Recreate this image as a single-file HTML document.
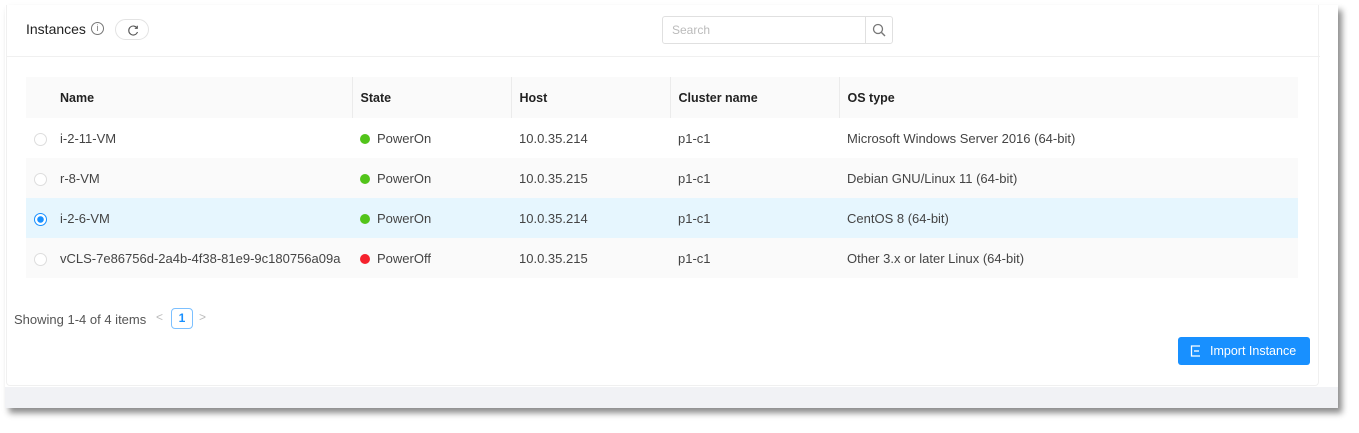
<!DOCTYPE html>
<html><head><meta charset="utf-8"><style>
*{box-sizing:border-box;margin:0;padding:0}
body{width:1359px;height:433px;background:#fff;font-family:"Liberation Sans",Arial,sans-serif;position:relative;overflow:hidden;color:#333}
.win{position:absolute;left:5px;top:5px;width:1333px;height:403px;background:#fff;box-shadow:4px 5px 6px rgba(0,0,0,.45)}
.band{position:absolute;left:0;top:382px;width:1333px;height:21px;background:#f1f2f5}
.card{position:absolute;left:1px;top:0;width:1313px;height:381px;border:1px solid #f0f0f0;border-top:none;background:#fff;border-radius:0 0 4px 4px}
.hdr{position:absolute;left:0;top:0;width:1313px;height:52px;border-bottom:1px solid #f0f0f0}
.title{position:absolute;left:19px;top:16px;font-size:14px;color:#222}
.info{position:absolute;left:84px;top:17px;width:13px;height:13px;border:1px solid #777;border-radius:50%;font-size:9px;text-align:center;line-height:11px;color:#777}
.ref{position:absolute;left:108px;top:14px;width:34px;height:21px;border:1px solid #e3e3e3;border-radius:11px}
.search{position:absolute;left:655px;top:11px;width:231px;height:28px;border:1px solid #e0e0e0;border-radius:3px}
.search span{position:absolute;left:9px;top:6px;font-size:12px;color:#bbb}
.search .btn{position:absolute;right:0;top:0;width:27px;height:26px;border-left:1px solid #e0e0e0}
table{position:absolute;left:19px;top:72px;width:1272px;border-collapse:collapse;font-size:13px;table-layout:fixed}
td,th{height:40px;text-align:left;font-weight:normal;padding:0 0 0 8px;white-space:nowrap;overflow:visible}
th{background:#fafafa;color:#222;font-weight:bold;height:41px;font-size:12.5px}
tr.s td{background:#fafafa}
tr.sel td{background:#e6f6fe}
.sep{border-left:1px solid #ebebeb}
.rad{display:inline-block;width:13px;height:13px;border:1px solid #ddd;border-radius:50%;background:#fff;vertical-align:middle}
.rad.on{border-color:#1890ff;background:radial-gradient(#1890ff 3px,#fff 3.5px)}
.dot{display:inline-block;width:10px;height:10px;border-radius:50%;margin-right:7px;vertical-align:-1px}
.g{background:#52c41a}.r{background:#f5222d}
td{color:#444}
.pg{position:absolute;left:7px;top:307px;font-size:13px;color:#555}
.pb{position:absolute;left:164px;top:303px;width:22px;height:21px;border:1px solid #7cc0ff;border-radius:4px;color:#1890ff;font-size:12px;text-align:center;line-height:19px;font-weight:bold}
.arr{position:absolute;top:305px;font-size:12px;color:#bbb}
.imp{position:absolute;left:1171px;top:332px;width:132px;height:28px;background:#1890ff;border-radius:3px;color:#fff;font-size:12.5px;line-height:28px;padding-left:32px}
</style></head><body>
<div class="win">
<div class="band"></div>
<div class="card">
<div class="hdr">
<div class="title">Instances</div>
<div class="info">i</div>
<div class="ref"><svg width="34" height="21" viewBox="0 0 34 21"><path d="M21 8 A4.5 4.5 0 1 0 21.5 12" fill="none" stroke="#555" stroke-width="1.1"/><path d="M21.3 5.8 L21.3 8.3 L18.8 8.3" fill="none" stroke="#555" stroke-width="1.1"/></svg></div>
<div class="search"><span>Search</span><div class="btn"><svg width="27" height="26"><circle cx="12" cy="12" r="4.5" fill="none" stroke="#777" stroke-width="1.3"/><path d="M15.5 15.5 L19 19" stroke="#777" stroke-width="1.4"/></svg></div></div>
</div>
<table>
<colgroup><col style="width:26px"><col style="width:300px"><col style="width:159px"><col style="width:159px"><col style="width:169px"><col></colgroup>
<tr><th></th><th>Name</th><th class="sep">State</th><th class="sep">Host</th><th class="sep">Cluster name</th><th class="sep">OS type</th></tr>
<tr><td><span class="rad"></span></td><td>i-2-11-VM</td><td><span class="dot g"></span>PowerOn</td><td>10.0.35.214</td><td>p1-c1</td><td>Microsoft Windows Server 2016 (64-bit)</td></tr>
<tr class="s"><td><span class="rad"></span></td><td>r-8-VM</td><td><span class="dot g"></span>PowerOn</td><td>10.0.35.215</td><td>p1-c1</td><td>Debian GNU/Linux 11 (64-bit)</td></tr>
<tr class="sel"><td><span class="rad on"></span></td><td>i-2-6-VM</td><td><span class="dot g"></span>PowerOn</td><td>10.0.35.214</td><td>p1-c1</td><td>CentOS 8 (64-bit)</td></tr>
<tr class="s"><td><span class="rad"></span></td><td>vCLS-7e86756d-2a4b-4f38-81e9-9c180756a09a</td><td><span class="dot r"></span>PowerOff</td><td>10.0.35.215</td><td>p1-c1</td><td>Other 3.x or later Linux (64-bit)</td></tr>
</table>
<div class="pg">Showing 1-4 of 4 items</div>
<div class="arr" style="left:149px">&lt;</div>
<div class="pb">1</div>
<div class="arr" style="left:192px">&gt;</div>
<div class="imp"><svg style="position:absolute;left:12px;top:8px" width="12" height="12"><path d="M10 1 H1.5 V11 H10" fill="none" stroke="#fff" stroke-width="1.3"/><path d="M4 6 H9" stroke="#fff" stroke-width="1.3"/></svg>Import Instance</div>
</div>
</div>
</body></html>
